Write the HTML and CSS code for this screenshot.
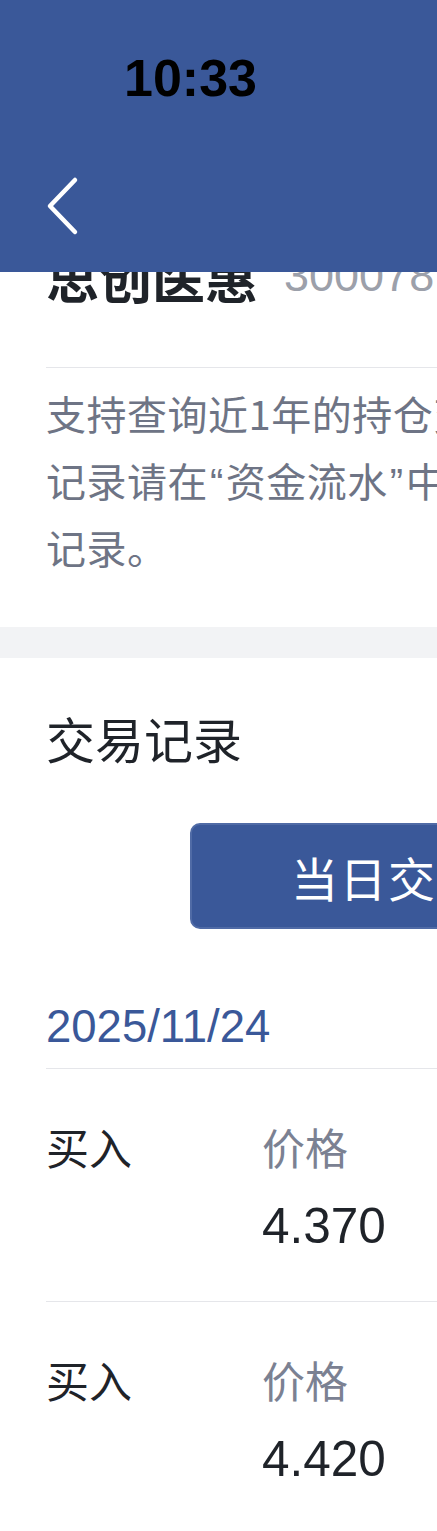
FILE: index.html
```html
<!DOCTYPE html>
<html>
<head>
<meta name="viewport" content="width=device-width, initial-scale=1">
<link rel="stylesheet" href="styles.css">
</head>
<body>
<header class="topbar">
  <div class="status">
    <span class="clock">10:33</span>
  </div>
  <div class="navbar">
    <a class="back" href="#">
      <svg width="36" height="64" viewBox="0 0 36 64">
        <path d="M31 6 L6 32 L31 58" fill="none" stroke="#fff" stroke-width="4.5" stroke-linecap="round" stroke-linejoin="round"/>
      </svg>
    </a>
  </div>
</header>

<div class="page">
  <section class="info">
    <div class="stock">
      <h1 class="stock-name">思创医惠</h1>
      <span class="stock-code">300078</span>
    </div>
    <p class="note">支持查询近1年的持仓变动与成交明细，更早之前的交易记录请在<span class="quote">“</span>资金流水<span class="quote">”</span>中查询，或致电客服热线查历史交易记录。</p>
  </section>

  <div class="band"></div>

  <section class="records">
    <h2 class="records-title">交易记录</h2>

    <div class="tabs">
      <div class="tab active">当日交易</div>
      <div class="tab">历史交易</div>
    </div>

    <div class="date">2025/11/24</div>

    <div class="deal">
      <div class="deal-side">买入</div>
      <div class="deal-col">
        <div class="deal-label">价格</div>
        <div class="deal-value">4.370</div>
      </div>
      <div class="deal-col">
        <div class="deal-label">数量</div>
        <div class="deal-value">1000</div>
      </div>
      <div class="deal-col">
        <div class="deal-label">成交额</div>
        <div class="deal-value">4370.00</div>
      </div>
    </div>

    <div class="deal">
      <div class="deal-side">买入</div>
      <div class="deal-col">
        <div class="deal-label">价格</div>
        <div class="deal-value">4.420</div>
      </div>
      <div class="deal-col">
        <div class="deal-label">数量</div>
        <div class="deal-value">1000</div>
      </div>
      <div class="deal-col">
        <div class="deal-label">成交额</div>
        <div class="deal-value">4420.00</div>
      </div>
    </div>
  </section>
</div>
</body>
</html>
```

FILE: styles.css
```css
* {box-sizing: border-box;}

html, body {overflow-x: hidden;}

body {
  margin: 0;
  background: #fff;
  font-family: "Noto Sans CJK SC", sans-serif;
  color: #1f2329;
}

/* top bar sits over the scrolled content */
.topbar {
  position: fixed;
  top: 0;
  left: 0;
  width: 100%;
  height: 272px;
  background-color: #3a5899;
  z-index: 10;
}

.status {
  padding: 48px 0 0 124px;
  height: 108px;
}

.clock {
  font-family: "Liberation Sans", Arial, sans-serif;
  font-weight: bold;
  font-size: 52px;
  line-height: 60px;
  color: #000;
}

.navbar {
  padding: 66px 0 0 44px;
}

.back {
  display: block;
  width: 36px;
  height: 64px;
}

.back svg {display: block;}

.page {
  width: 1078px;
}

.info {
  padding: 240px 12px 46px 46px;
}

.stock {
  display: flex;
  align-items: flex-start;
  gap: 26px;
  padding-bottom: 55px;
  border-bottom: 1px solid #e5e6ea;
}

.stock-name {
  margin: 0;
  font-size: 53px;
  line-height: 72px;
  font-weight: bold;
  color: #1f2329;
}

.stock-code {
  font-family: "Liberation Sans", Arial, sans-serif;
  font-size: 45px;
  line-height: 72px;
  color: #9ca0aa;
}

.note {
  margin: 0;
  padding-top: 12px;
  font-size: 40px;
  line-height: 67px;
  letter-spacing: 0.5px;
  color: #6e7485;
}

.quote {
  margin: 0 2px;
  font-family: "Liberation Sans", Arial, sans-serif;
  line-height: 1;
}

.band {
  height: 31px;
  background-color: #f2f3f5;
}

.records {
  padding: 48px 32px 0 46px;
}

.records-title {
  margin: 0;
  font-size: 49px;
  line-height: 64px;
  font-weight: normal;
  color: #1f2329;
}

.tabs {
  display: flex;
  margin: 53px 0 0 144px;
}

.tab {
  width: 396px;
  height: 106px;
  display: flex;
  align-items: center;
  justify-content: center;
  font-size: 47px;
  letter-spacing: 1.5px;
  color: #3a5899;
  border: 2px solid #3a5899;
}

.tab:first-child {border-radius: 10px 0 0 10px;}
.tab:last-child {border-radius: 0 10px 10px 0;}

.tab.active {
  background-color: #3a5899;
  border-color: #506ba6;
  color: #fff;
}

.date {
  margin-top: 70px;
  padding-bottom: 13px;
  font-family: "Liberation Sans", Arial, sans-serif;
  font-size: 45.5px;
  line-height: 56px;
  color: #3a5899;
}

.deal {
  display: flex;
  padding: 48px 0 45px;
  border-top: 1px solid #e5e6ea;
}

.deal-side {
  width: 216px;
  font-size: 43px;
  line-height: 58px;
  color: #1f2329;
}

.deal-col {
  width: 260px;
}

.deal-label {
  font-size: 43px;
  line-height: 58px;
  color: #7b8192;
}

.deal-value {
  margin-top: 21px;
  font-family: "Liberation Sans", Arial, sans-serif;
  font-size: 49.5px;
  line-height: 60px;
  color: #1f2329;
}
```
